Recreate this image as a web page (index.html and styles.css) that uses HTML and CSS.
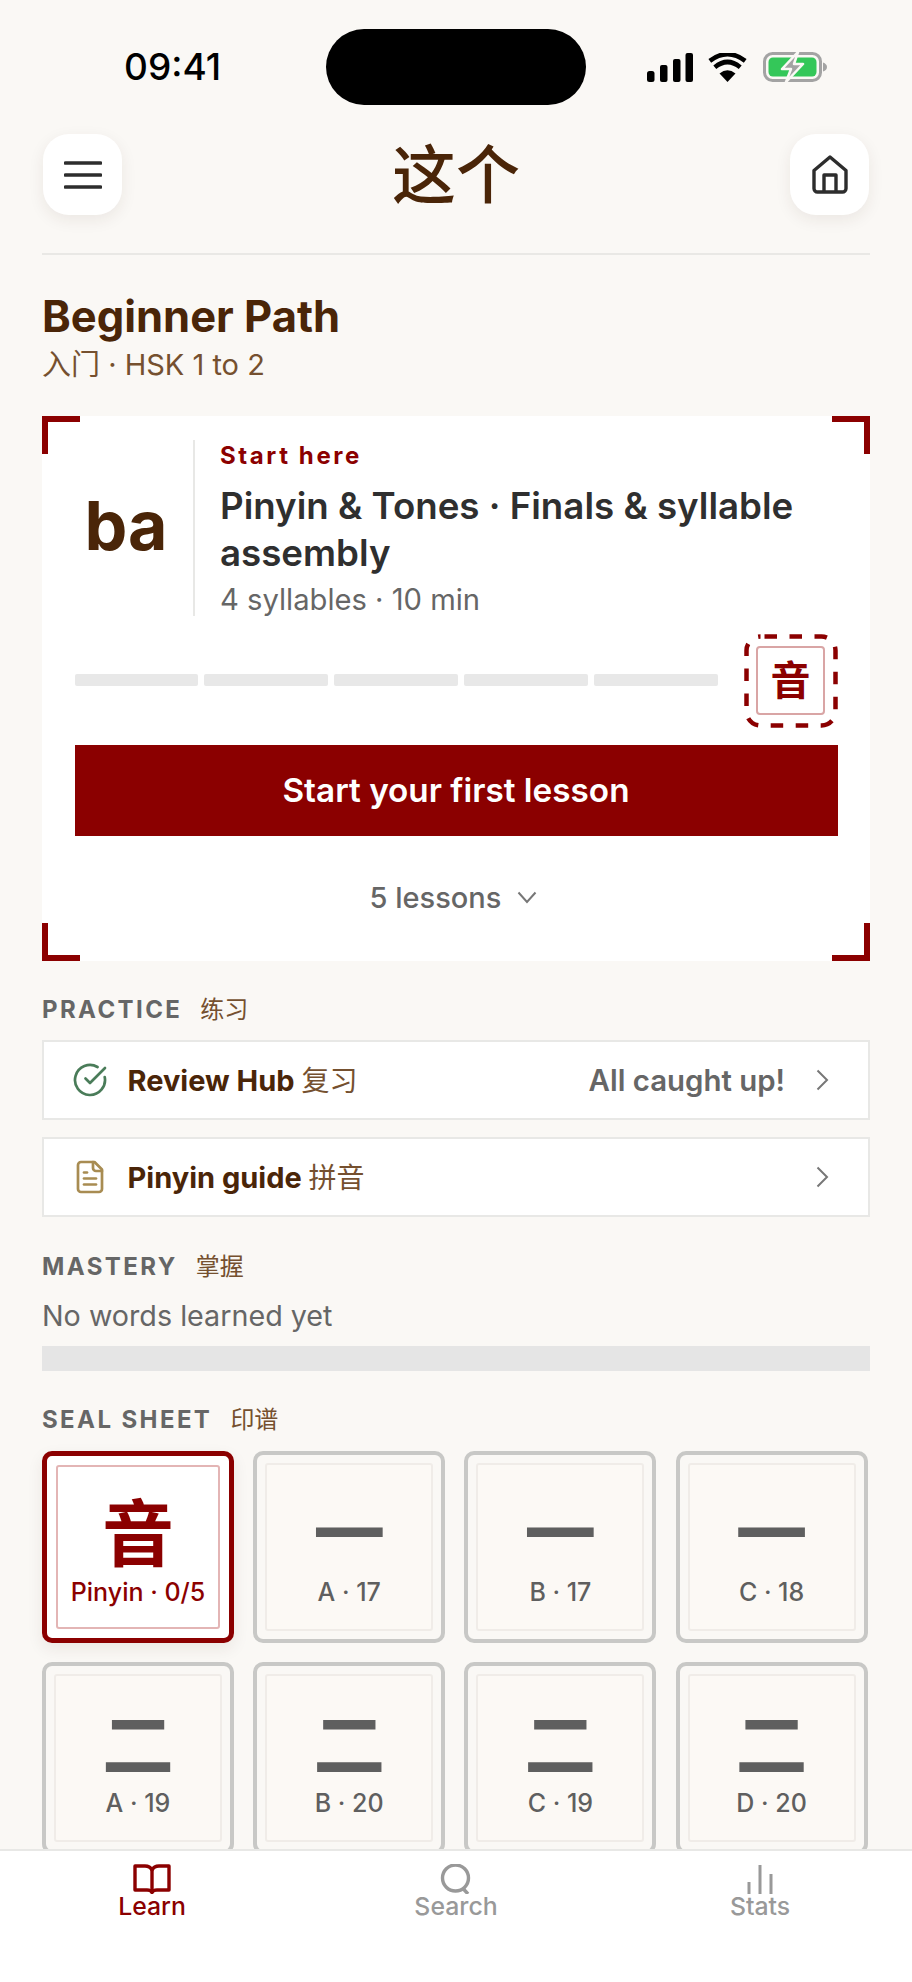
FILE: index.html
```html
<!DOCTYPE html>
<html lang="zh-CN">
<head>
<meta charset="utf-8">
<title>这个</title>
<link rel="stylesheet" href="styles.css">
</head>
<body>
<div class="app">
  <div class="status">
    <div class="time">09:41</div>
    <div class="island"></div>
    <div class="status-icons">
      <svg class="ic-signal" width="46" height="29" viewBox="0 0 46 29"><rect x="0" y="18" width="7.5" height="11" rx="2.5"/><rect x="13" y="12" width="7.5" height="17" rx="2"/><rect x="26" y="6" width="7.5" height="23" rx="2"/><rect x="38.5" y="0" width="7.5" height="29" rx="2"/></svg>
      <svg class="ic-wifi" width="39" height="29" viewBox="0 0 39 29"><path d="M11.5 20.5Q19.5 14 27.5 20.5L19.5 29Z" fill="#000"/><path d="M6.8 14.2Q19.5 3.800 32.2 14.200" fill="none" stroke="#000" stroke-width="4.600"/><path d="M1.800 7.800Q19.500 -5.500 37.200 7.800" fill="none" stroke="#000" stroke-width="4.600"/></svg>
      <svg class="ic-battery" width="64" height="30" viewBox="0 0 64 30"><rect x="1.500" y="1.500" width="56" height="27" rx="8" fill="none" stroke="#a3a3a3" stroke-width="3"/><rect x="5.500" y="5.500" width="48" height="19" rx="4.500" fill="#34c759"/><path d="M60 10.500Q64 12 64 15Q64 18 60 19.500Z" fill="#a3a3a3"/><path d="M35 0L19 17H28L23 30L40 12H31Z" fill="#a3a3a3" stroke="#faf8f5" stroke-width="2.500" stroke-linejoin="round"/></svg>
    </div>
  </div>

  <header class="header">
    <button class="round-btn" aria-label="Menu">
      <svg width="38" height="28" viewBox="0 0 38 28"><path d="M1.500 2H36.500M1.500 14H36.500M1.500 26H36.500" fill="none" stroke="#2d2d2d" stroke-width="3.600" stroke-linecap="round"/></svg>
    </button>
    <div class="logo">这个</div>
    <button class="round-btn" aria-label="Home">
      <svg width="36" height="39" viewBox="0 0 36 39"><path d="M2 15.500L18 2L34 15.500V33.500A3.500 3.500 0 0 1 30.500 37H5.500A3.500 3.500 0 0 1 2 33.500Z" fill="none" stroke="#2d2d2d" stroke-width="3.400" stroke-linejoin="round"/><path d="M12 37V20H24V37" fill="none" stroke="#2d2d2d" stroke-width="3.400" stroke-linejoin="round"/></svg>
    </button>
  </header>

  <main class="main">
    <h1 class="page-title">Beginner Path</h1>
    <p class="page-sub">入门 · HSK 1 to 2</p>

    <section class="card">
      <span class="corner corner-tl"></span>
      <span class="corner corner-tr"></span>
      <span class="corner corner-bl"></span>
      <span class="corner corner-br"></span>
      <div class="lesson-head">
        <div class="lesson-glyph">ba</div>
        <div class="lesson-info">
          <div class="lesson-eyebrow">Start here</div>
          <div class="lesson-title">Pinyin &amp; Tones · Finals &amp; syllable assembly</div>
          <div class="lesson-meta">4 syllables · 10 min</div>
        </div>
      </div>
      <div class="progress-row">
        <div class="segments">
          <span class="segment"></span><span class="segment"></span><span class="segment"></span><span class="segment"></span><span class="segment"></span>
        </div>
        <div class="stamp">
          <svg class="stamp-dash" width="94" height="94" viewBox="0 0 94 94"><rect x="2.500" y="2.500" width="89" height="89" rx="14" fill="none" stroke="#8b0000" stroke-width="4.500" stroke-dasharray="12.500 12.500" stroke-dashoffset="-4"/></svg>
          <div class="stamp-inner">音</div>
        </div>
      </div>
      <button class="cta">Start your first lesson</button>
      <div class="lessons-toggle">
        <span>5 lessons</span>
        <svg width="20" height="13" viewBox="0 0 20 13"><path d="M1.500 1.500L10 11L18.500 1.500" fill="none" stroke="#777" stroke-width="2"/></svg>
      </div>
    </section>

    <h2 class="section-label section-practice">PRACTICE <span class="section-cn">练习</span></h2>
    <div class="rows">
      <a class="row">
        <svg class="row-icon" width="36" height="36" viewBox="0 0 24 24" fill="none" stroke="#4a7c59" stroke-width="1.800" stroke-linecap="round" stroke-linejoin="round"><path d="M21.801 10A10 10 0 1 1 17 3.335"/><path d="m9 11 3 3L22 4"/></svg>
        <span class="row-title">Review Hub <span class="row-cn">复习</span></span>
        <span class="row-status">All caught up!</span>
        <svg class="row-chevron" width="13" height="22" viewBox="0 0 13 22"><path d="M1.500 1.500L11 11L1.500 20.500" fill="none" stroke="#777" stroke-width="2"/></svg>
      </a>
      <a class="row">
        <svg class="row-icon" width="36" height="36" viewBox="0 0 24 24" fill="none" stroke="#a88c52" stroke-width="1.800" stroke-linecap="round" stroke-linejoin="round"><path d="M15 2H6a2 2 0 0 0-2 2v16a2 2 0 0 0 2 2h12a2 2 0 0 0 2-2V7Z"/><path d="M14 2v4a2 2 0 0 0 2 2h4"/><path d="M10 9H8"/><path d="M16 13H8"/><path d="M16 17H8"/></svg>
        <span class="row-title">Pinyin guide <span class="row-cn">拼音</span></span>
        <svg class="row-chevron" width="13" height="22" viewBox="0 0 13 22"><path d="M1.500 1.500L11 11L1.500 20.500" fill="none" stroke="#777" stroke-width="2"/></svg>
      </a>
    </div>

    <h2 class="section-label section-mastery">MASTERY <span class="section-cn">掌握</span></h2>
    <p class="mastery-text">No words learned yet</p>
    <div class="mastery-bar"></div>

    <h2 class="section-label section-seal">SEAL SHEET <span class="section-cn">印谱</span></h2>
    <div class="seal-grid">
      <div class="tile tile-active"><div class="tile-inner"><div class="tile-glyph">音</div><div class="tile-label">Pinyin · 0/5</div></div></div>
      <div class="tile"><div class="tile-inner"><div class="tile-glyph">一</div><div class="tile-label">A · 17</div></div></div>
      <div class="tile"><div class="tile-inner"><div class="tile-glyph">一</div><div class="tile-label">B · 17</div></div></div>
      <div class="tile"><div class="tile-inner"><div class="tile-glyph">一</div><div class="tile-label">C · 18</div></div></div>
      <div class="tile"><div class="tile-inner"><div class="tile-glyph">二</div><div class="tile-label">A · 19</div></div></div>
      <div class="tile"><div class="tile-inner"><div class="tile-glyph">二</div><div class="tile-label">B · 20</div></div></div>
      <div class="tile"><div class="tile-inner"><div class="tile-glyph">二</div><div class="tile-label">C · 19</div></div></div>
      <div class="tile"><div class="tile-inner"><div class="tile-glyph">二</div><div class="tile-label">D · 20</div></div></div>
    </div>
  </main>

  <nav class="tabbar">
    <a class="tab tab-active">
      <svg width="38" height="30" viewBox="0 0 38 30" fill="none" stroke="#8b0000" stroke-width="3.400" stroke-linejoin="round"><path d="M19 6Q17 2 12 2H2V26H14Q18 26 19 28.500Q20 26 24 26H36V2H26Q21 2 19 6Z"/><path d="M19 6V28"/></svg>
      <span class="tab-label">Learn</span>
    </a>
    <a class="tab">
      <svg width="34" height="30" viewBox="0 0 34 30" fill="none" stroke="#999" stroke-width="3.400"><circle cx="16.500" cy="14" r="13"/><path d="M24 24.500L29 30"/></svg>
      <span class="tab-label">Search</span>
    </a>
    <a class="tab">
      <svg width="26" height="30" viewBox="0 0 26 30" fill="none" stroke="#999" stroke-width="3"><path d="M2 30V18M13 30V1M24 30V10"/></svg>
      <span class="tab-label">Stats</span>
    </a>
  </nav>
</div>
</body>
</html>
```

FILE: styles.css
```css
* { box-sizing: border-box; }
html, body { margin: 0; padding: 0; }
body {
  background: #faf8f5;
  font-family: Inter, "Noto Sans CJK SC", "Noto Sans", sans-serif;
  color: #2f2f2f;
}
.app {
  width: 912px;
  height: 1982px;
  display: flex;
  flex-direction: column;
  overflow: hidden;
  background: #faf8f5;
}

/* status bar */
.status {
  flex: none;
  display: grid;
  grid-template-columns: 1fr 260px 1fr;
  align-items: center;
  height: 76px;
  margin-top: 29px;
  margin-bottom: 29px;
}
.time {
  justify-self: start;
  margin-left: 124px;
  font-size: 37px;
  line-height: 40px;
  font-weight: 500;
  color: #000;
}
.island { height: 76px; border-radius: 38px; background: #000; }
.status-icons {
  display: flex;
  align-items: center;
  margin-left: 61px;
}
.ic-wifi { margin-left: 15px; }
.ic-battery { margin-left: 16px; }

/* header */
.header {
  flex: none;
  display: flex;
  justify-content: space-between;
  align-items: center;
  margin: 0 42px;
  padding: 0 1px 38px;
  border-bottom: 2px solid #e9e8e5;
}
.round-btn {
  width: 79px;
  height: 81px;
  padding: 0;
  display: flex;
  align-items: center;
  justify-content: center;
  background: #fff;
  border: 0;
  border-radius: 26px;
  box-shadow: 0 5px 16px rgba(60, 40, 20, 0.08);
}
.logo {
  font-size: 64px;
  line-height: 81px;
  font-weight: 500;
  color: #4a2508;
}

/* main */
.main {
  flex: 1;
  min-height: 0;
  overflow: hidden;
  padding: 0 42px;
}
.page-title {
  margin: 34.5px 0 0;
  font-size: 43.5px;
  line-height: 52px;
  font-weight: 700;
  color: #4a2508;
}
.page-sub {
  margin: 5.5px 0 0;
  font-size: 29px;
  line-height: 36px;
  color: #75502f;
}

/* lesson card */
.card {
  position: relative;
  margin-top: 32.7px;
  padding: 24px 32.5px 0;
  height: 545px;
  background: #fff;
}
.corner {
  position: absolute;
  width: 38px;
  height: 38px;
  border: 0 solid #8b0000;
}
.corner-tl { top: 0; left: 0; border-top-width: 6px; border-left-width: 6px; }
.corner-tr { top: 0; right: 0; border-top-width: 6px; border-right-width: 6px; }
.corner-bl { bottom: 0; left: 0; border-bottom-width: 6px; border-left-width: 6px; }
.corner-br { bottom: 0; right: 0; border-bottom-width: 6px; border-right-width: 6px; }
.lesson-head { display: flex; height: 176px; }
.lesson-glyph {
  flex: none;
  width: 118.5px;
  padding-left: 10px;
  margin-top: -6px;
  align-self: center;
  font-size: 68px;
  line-height: 80px;
  font-weight: 700;
  color: #4a2508;
}
.lesson-info {
  flex: 1;
  padding: 1px 0 0 25px;
  border-left: 2px solid #e8e8e6;
}
.lesson-eyebrow {
  font-size: 24px;
  line-height: 30px;
  font-weight: 700;
  letter-spacing: 2.6px;
  color: #8b0000;
}
.lesson-title {
  margin-top: 11px;
  font-size: 36.7px;
  line-height: 47px;
  font-weight: 600;
  color: #2f2f2f;
}
.lesson-meta {
  margin-top: 6px;
  font-size: 29.2px;
  line-height: 36px;
  color: #666;
}
.progress-row {
  display: flex;
  align-items: center;
  gap: 26px;
  margin-top: 18px;
}
.segments { flex: 1; display: flex; gap: 6.5px; margin-top: -1px; }
.segment {
  flex: 1;
  height: 12.500px;
  border-radius: 2px;
  background: #e8e8e8;
}
.stamp {
  position: relative;
  flex: none;
  width: 94px;
  height: 94px;
  display: flex;
  align-items: center;
  justify-content: center;
}
.stamp-dash { position: absolute; top: 0; left: 0; }
.stamp-inner {
  width: 69px;
  height: 69px;
  display: flex;
  align-items: center;
  justify-content: center;
  border: 2px solid #d9a5a5;
  border-radius: 4px;
  font-size: 40px;
  line-height: 1;
  font-weight: 700;
  color: #8b0000;
}
.cta {
  display: block;
  width: 100%;
  height: 91px;
  margin-top: 17px;
  border: 0;
  border-radius: 0;
  background: #8b0000;
  color: #fff;
  font-family: inherit;
  font-size: 33.3px;
  font-weight: 600;
}
.lessons-toggle {
  display: flex;
  align-items: center;
  justify-content: center;
  gap: 16px;
  height: 124px;
  padding-right: 5px;
  font-size: 29px;
  font-weight: 500;
  color: #666;
}

/* section labels */
.section-label {
  margin: 0;
  font-size: 24px;
  line-height: 30px;
  font-weight: 700;
  letter-spacing: 2.4px;
  color: #666;
}
.section-practice { margin-top: 34px; }
.section-mastery { margin-top: 34.7px; }
.section-seal { margin-top: 34px; }
.section-cn {
  margin-left: 10px;
  font-weight: 400;
  letter-spacing: 0;
  color: #75502f;
}

/* rows */
.rows {
  display: flex;
  flex-direction: column;
  gap: 17px;
  margin-top: 15.8px;
}
.row {
  display: flex;
  align-items: center;
  height: 80px;
  padding: 0 39px 0 27.5px;
  background: #fff;
  border: 2px solid #e8e8e6;
}
.row-icon { flex: none; }
.row-title {
  flex: 1;
  margin-left: 20px;
  padding-bottom: 2px;
  font-size: 29px;
  font-weight: 700;
  color: #4a2508;
}
.row-cn { font-weight: 400; font-size: 28px; color: #75502f; }
.row-status {
  margin-right: 31px;
  font-size: 29.4px;
  font-weight: 600;
  color: #666;
}
.row-chevron { flex: none; }

/* mastery */
.mastery-text {
  margin: 15.5px 0 0;
  font-size: 28.7px;
  line-height: 36px;
  color: #666;
}
.mastery-bar {
  height: 25.500px;
  margin-top: 12px;
  background: #e5e5e5;
}

/* seal sheet */
.seal-grid {
  display: grid;
  grid-template-columns: repeat(4, 192px);
  column-gap: 19.2px;
  row-gap: 19px;
  margin-top: 15.5px;
}
.tile {
  height: 192px;
  padding: 8px;
  border: 4px solid #c8c8c6;
  border-radius: 10px;
  background: #faf8f5;
}
.tile-active {
  padding: 9px;
  border: 5px solid #8b0000;
  background: #fff;
  box-shadow: 0 6px 16px rgba(60, 40, 20, 0.08);
}
.tile-inner {
  height: 100%;
  display: flex;
  flex-direction: column;
  align-items: center;
  padding-top: 33px;
  background: #fcf9f5;
  border: 2px solid #f0ece8;
  border-radius: 3px;
}
.tile-active .tile-inner {
  padding-top: 31px;
  background: #fff;
  border-color: #e3b5b5;
}
.tile-glyph {
  height: 72px;
  font-size: 72px;
  line-height: 72px;
  font-weight: 700;
  color: #5f5f5f;
}
.tile-active .tile-glyph { color: #8b0000; }
.tile-label {
  margin-top: 7px;
  font-size: 25px;
  line-height: 30px;
  font-weight: 500;
  color: #5f5f5f;
}
.tile-active .tile-label { color: #8b0000; }

/* tab bar */
.tabbar {
  flex: none;
  display: flex;
  height: 133px;
  padding-top: 13px;
  background: #fff;
  border-top: 2px solid #e8e8e6;
}
.tab {
  flex: 1;
  display: flex;
  flex-direction: column;
  align-items: center;
  color: #999;
}
.tab-active { color: #8b0000; }
.tab-label {
  margin-top: 0;
  font-size: 24.8px;
  line-height: 24px;
  font-weight: 500;
}
```
